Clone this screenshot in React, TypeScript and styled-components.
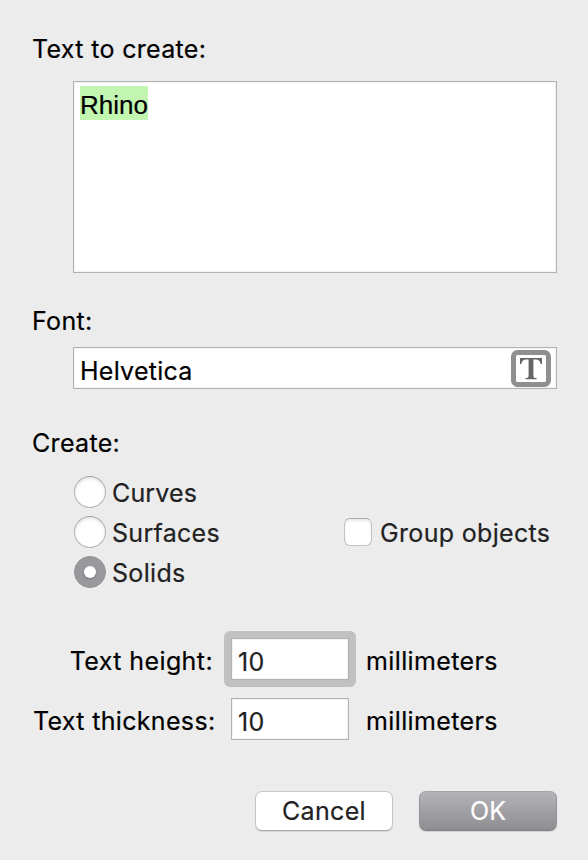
import React from 'react';
import styled, { createGlobalStyle } from 'styled-components';

const GlobalStyle = createGlobalStyle`
  *, *::before, *::after { box-sizing: border-box; }
  body { margin: 0; background: #ececec; }
`;

const Dialog = styled.main`
  width: 588px;
  height: 860px;
  padding: 34px 31px 0 33px;
  background: #ececec;
  color: #000;
  font: 400 25px/30px Inter, 'Liberation Sans', sans-serif;
`;

const Text = styled.span<{ $spacing?: number }>`
  letter-spacing: ${p => p.$spacing ?? 0.33}px;
  -webkit-text-stroke: 0.2px currentColor;
  white-space: pre;
`;

const SectionLabel = styled.div`
  height: 30px;
  margin-left: -1px;
`;

const Field = styled.div`
  display: flex;
  align-items: center;
  height: 42px;
  padding: 6px 6px 0;
  background: #fff;
  border: 1px solid #b1b1b1;
  box-shadow: inset 0 0 0 1px #f3f3f3;
`;

const TextArea = styled(Field)`
  align-items: flex-start;
  height: 192px;
  margin: 17px 0 33px 40px;
  padding: 4px 6px;
`;

const Selection = styled.span`
  height: 34px;
  background: #c2f5b0;
  font: 26px/39px 'Liberation Sans', Arial, sans-serif;
  -webkit-text-stroke: 0.2px currentColor;
`;

const FontField = styled(Field)`
  justify-content: space-between;
  margin: 11px 0 39px 40px;
  padding: 0 5px 0 6px;
`;

const FontName = styled.span`
  padding-top: 6px;
`;

const Options = styled.div`
  display: grid;
  grid-template-columns: 270px 1fr;
  grid-auto-rows: 40px;
  margin: 14px 0 0 41px;
  color: #222;
`;

const Option = styled.label<{ $column?: number }>`
  display: flex;
  align-items: center;
  grid-column: ${p => p.$column ?? 1};
`;

const OptionText = styled(Text)`
  padding-top: 2px;
`;

const Radio = styled.span<{ $checked?: boolean }>`
  display: grid;
  place-items: center;
  width: 32px;
  height: 32px;
  margin-right: 6px;
  border-radius: 50%;
  border: 1px solid ${p => (p.$checked ? '#929196' : '#b4b4b4')};
  border-top-color: ${p => (p.$checked ? '#929196' : '#a2a2a2')};
  background: ${p => (p.$checked ? '#99989d' : '#fff')};
  box-shadow: ${p => (p.$checked ? 'none' : 'inset 0 2px 3px #e4e4e4')};
`;

const RadioDot = styled.span`
  width: 12px;
  height: 12px;
  border-radius: 50%;
  background: #fff;
  box-shadow: 0 1px 2px #77767b;
`;

const Checkbox = styled.span`
  width: 28px;
  height: 28px;
  margin-right: 8px;
  border: 1px solid #c2c2c2;
  border-top-color: #aaa;
  border-radius: 6px;
  background: #fff;
  box-shadow: inset 0 2px 3px #ebebeb;
`;

const Measures = styled.div`
  display: grid;
  grid-template-columns: 181px 118px 1fr;
  grid-auto-rows: 42px;
  column-gap: 17px;
  row-gap: 18px;
  align-items: center;
  margin-top: 46px;
`;

const MeasureLabel = styled.div`
  padding: 4px 1px 0 0;
  text-align: right;
  white-space: nowrap;
`;

const Unit = styled.div`
  padding-top: 4px;
`;

const NumberField = styled(Field)`
  color: #222;
`;

const FocusRing = styled.div`
  margin: -7px;
  padding: 7px;
  border-radius: 6px;
  background: #c1c1c3;
`;

const Actions = styled.div`
  display: flex;
  justify-content: flex-end;
  gap: 26px;
  margin-top: 51px;
`;

const Button = styled.button<{ $primary?: boolean }>`
  width: 138px;
  height: 40px;
  padding: 0;
  border: 1px solid;
  border-color: ${p => (p.$primary ? '#a4a3a8 #939297 #817f85' : '#c9c9c9 #c5c5c5 #acacac')};
  border-radius: 7px;
  background: ${p => (p.$primary ? 'linear-gradient(#b4b3b8, #8e8d92)' : '#fff')};
  box-shadow: 0 1px 1px #d2d2d2;
  color: ${p => (p.$primary ? '#fff' : '#222')};
  font: inherit;
`;

const FontIcon = () => (
  <svg width="40" height="37" viewBox="0 0 40 37" aria-label="Choose font">
    <rect x="2.5" y="2.5" width="35" height="32" rx="4" fill="#fff" stroke="#8e908e" strokeWidth="5" />
    <path d="M9 8H31V14H29.6C29 10.5 27.2 9.5 24.5 9.5H22.4V25.5C22.4 27.6 23 28 25.6 28V29.2H14.4V28C17 28 17.6 27.6 17.6 25.5V9.5H15.5C12.8 9.5 11 10.5 10.4 14H9Z" fill="#666" />
  </svg>
);

export default function App() {
  return (
    <>
      <GlobalStyle />
      <Dialog>
        <SectionLabel><Text>Text to create:</Text></SectionLabel>
        <TextArea><Selection>Rhino</Selection></TextArea>
        <SectionLabel><Text>Font:</Text></SectionLabel>
        <FontField>
          <FontName><Text $spacing={0.25}>Helvetica</Text></FontName>
          <FontIcon />
        </FontField>
        <SectionLabel><Text>Create:</Text></SectionLabel>
        <Options>
          <Option><Radio /><OptionText $spacing={0.15}>Curves</OptionText></Option>
          <Option><Radio /><OptionText $spacing={0.3}>Surfaces</OptionText></Option>
          <Option $column={2}><Checkbox /><OptionText>Group objects</OptionText></Option>
          <Option><Radio $checked><RadioDot /></Radio><OptionText>Solids</OptionText></Option>
        </Options>
        <Measures>
          <MeasureLabel><Text $spacing={0.4}>Text height:</Text></MeasureLabel>
          <FocusRing><NumberField><Text>10</Text></NumberField></FocusRing>
          <Unit><Text $spacing={0.38}>millimeters</Text></Unit>
          <MeasureLabel><Text>Text thickness:</Text></MeasureLabel>
          <NumberField><Text>10</Text></NumberField>
          <Unit><Text $spacing={0.38}>millimeters</Text></Unit>
        </Measures>
        <Actions>
          <Button><Text>Cancel</Text></Button>
          <Button $primary><Text $spacing={0}>OK</Text></Button>
        </Actions>
      </Dialog>
    </>
  );
}
